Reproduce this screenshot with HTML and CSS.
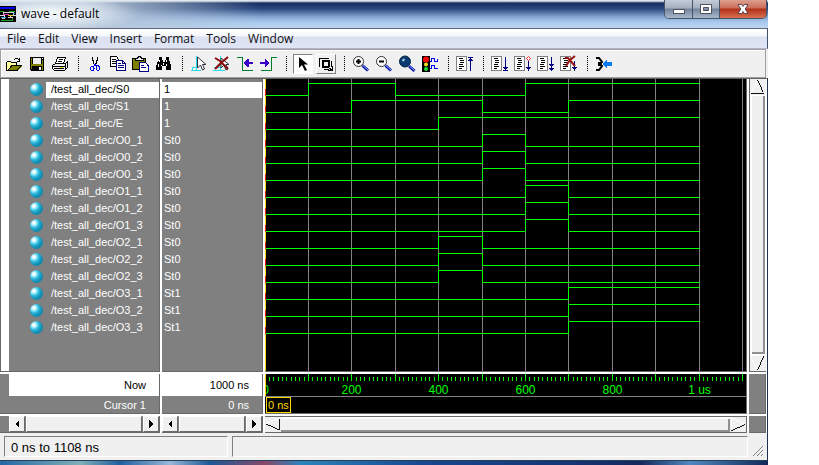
FILE: index.html
```html
<!DOCTYPE html>
<html lang="en">
<head>
<meta charset="utf-8">
<title>wave - default</title>
<link rel="stylesheet" href="styles.css">
</head>
<body>
<main class="window">
  <header class="titlebar">
    <svg class="app-icon" viewBox="0 0 16 16" shape-rendering="crispEdges">
      <path fill="#000" d="M0 0h16v16H0z"/><path fill="#0000f0" d="M0 1h15v2H0z"/>
      <path stroke="#d8d8d8" fill="none" d="M0 9.500h3v-3h10v3h3M4.500 9v3M10.500 9v3M2 12.500h3M8 11.500h5"/>
      <path stroke="#18a018" fill="none" d="M0 5.500h4M9 5.500h6M1 14.500h12M12.500 12v3"/>
      <path stroke="#e040c0" fill="none" d="M3 8.500h6"/><path stroke="#e0d020" fill="none" d="M8 9.500h5"/>
      <path stroke="#30a0e0" fill="none" d="M1 11.500h5M13 7.500h2"/>
    </svg>
    <h1>wave - default</h1>
    <div class="caption">
      <button class="min" aria-label="Minimize"><svg viewBox="0 0 14 12"><rect x="1.500" y="6.500" width="11" height="4" fill="#fff" stroke="#4b5160"/></svg></button>
      <button class="max" aria-label="Maximize"><svg viewBox="0 0 14 12"><path fill="#fff" fill-rule="evenodd" stroke="#4b5160" d="M1.500 1.500h11v9h-11zM4.500 4.500h5v3h-5z"/></svg></button>
      <button class="close" aria-label="Close"><svg viewBox="0 0 14 12"><path fill="#fff" stroke="#5b4650" d="M2 1.500h3.500l1.500 2 1.500-2H12L9.200 6l2.800 4.500H8.500L7 8.500l-1.500 2H2L4.800 6z"/></svg></button>
    </div>
  </header>

  <nav class="menubar">
    <button>File</button><button>Edit</button><button>View</button><button>Insert</button><button>Format</button><button>Tools</button><button>Window</button>
  </nav>

  <div class="toolbar" role="toolbar" aria-label="Wave tools">
    <button aria-label="Open"><svg viewBox="0 0 20 20">
      <path fill="#ffff9c" d="M3 8h4v1h6v3H8l-4 5H3z"/><path fill="#808000" d="M8 12h10l-4 5H4z"/>
      <path stroke="#000" fill="none" d="M2.500 16.500V8M3 7.500h4M7 8.500h6M12.500 9v2M3.500 16.500l4.500-5h9l-4 5H3M10 5.500h1M11 4.500h3M14 5.500h1M15.500 4v4M13 7.500h3"/>
    </svg></button>
    <button aria-label="Save"><svg viewBox="0 0 20 20">
      <path fill="#000" d="M3 3h14v14H4l-1-1z"/><path fill="#808000" d="M4 4h1v11H4zM15 6h1v10h-1z"/><path fill="#808000" d="M4 10h12v2H4z"/>
      <path fill="#efefef" d="M6 4h8v6H6zM15 4h1v1h-1zM12 13h2v3h-2z"/>
    </svg></button>
    <button aria-label="Print"><svg viewBox="0 0 20 20">
      <path fill="#fff" stroke="#000" d="M7.500 3.500h8l-2 6h-8z"/><path stroke="#000" d="M9 5.500h4M8 7.500h4"/>
      <path fill="#efefef" stroke="#000" d="M5.500 9.500h10l2-2v6l-3 3h-10l-2-2v-3z"/><path stroke="#000" fill="none" d="M2 12.500h13M15.500 9.500v6M4 14.500h10"/><path fill="#d8d800" d="M10 13h3v1h-3z"/>
    </svg></button>
    <span class="sep"></span>
    <button aria-label="Cut"><svg viewBox="0 0 20 20">
      <path stroke="#000" fill="none" d="M7.500 3v3l1 1v2l1 2M12.500 3v3l-1 1v2l-2 2"/>
      <path stroke="#0000e8" fill="none" d="M9.500 10v2M10.500 10v2M8 12.500H6.500l-1 1v2l1 1H8l1-2zM11.500 11.500h2l1 2v2l-1 1h-1l-1-1.500z"/>
    </svg></button>
    <button aria-label="Copy"><svg viewBox="0 0 20 20">
      <path fill="#fff" stroke="#000" d="M2.500 2.500h6l2 3v7h-8z"/><path stroke="#000" d="M4 5.500h4M4 7.500h4M4 9.500h4"/>
      <path fill="#fff" stroke="#000080" d="M8.500 6.500h6l3 3v7h-9zM14.500 7v2.500h3"/><path stroke="#000080" d="M10 9.500h3M10 11.500h6M10 13.500h6"/>
    </svg></button>
    <button aria-label="Paste"><svg viewBox="0 0 20 20">
      <path fill="#808000" stroke="#000" d="M1.500 4.500h13v11h-13z"/><path fill="#efefef" stroke="#000" d="M4.500 6.500v-2h2l1-2h2l1 2h2v2z"/>
      <path fill="#fff" stroke="#000080" d="M8.500 8.500h6l2.500 3v5.500H8.500z"/><path stroke="#000080" d="M10 11.500h3M10 13.500h5"/>
    </svg></button>
    <button aria-label="Find"><svg viewBox="0 0 20 20">
      <path fill="#000" d="M5 3h3v3h1v2h2V6h1V3h3v3l1 2 1 3v5h-5v-4H8v4H2v-4l2-5 1-1z"/><path fill="#fff" d="M5 6h1v2H5zM12 6h1v2h-1zM4 10h1v3H4zM12 10h1v2h-1zM7 11h1v1H7zM9 9h1v2H9z"/>
    </svg></button>
    <span class="sep"></span>
    <button aria-label="Add cursor"><svg viewBox="0 0 20 20">
      <path stroke="#28dcec" fill="none" d="M7.500 2v15M3 13.500h6M2 16.500h10M3.500 13v4"/>
      <path class="smooth" fill="#fff" stroke="#30343c" d="M8.500 3v11l3-3 2 5 2-1-2-4.500h3.500z"/>
    </svg></button>
    <button aria-label="Delete cursor"><svg viewBox="0 0 20 20">
      <path stroke="#28dcec" fill="none" d="M8.500 2v15M2 13.500h6M1 16.500h12"/>
      <path class="smooth" fill="#fff" stroke="#30343c" d="M9 4v10l3-3 2 5 2-1-2-4.500h3z"/>
      <path class="smooth" stroke="#880808" stroke-width="2" fill="none" d="M3 4l5 3 8 8M16 3l-6 5-7 7"/>
    </svg></button>
    <button aria-label="Previous transition"><svg viewBox="0 0 20 20">
      <path stroke="#008030" fill="none" d="M2 3.500h5.500v13h10"/><path fill="#3800c8" d="M9 8h1V7h1V6h1V5h2v3h4v2h-4v3h-2v-1h-1v-1h-1v-1H9z"/>
    </svg></button>
    <button aria-label="Next transition"><svg viewBox="0 0 20 20">
      <path stroke="#008030" fill="none" d="M3 16.500h10.500v-13H19"/><path fill="#3800c8" d="M11 8h-1V7H9V6H8V5H7v3H2v2h5v3h1v-1h1v-1h1v-1h1z"/>
    </svg></button>
    <span class="sep"></span>
    <button class="mode pressed" aria-label="Select mode"><svg viewBox="0 0 18 18"><path class="smooth" fill="#000" d="M5 2v11l3-3 3 6 2-1-3-5.500h4z"/></svg></button>
    <button class="mode" aria-label="Zoom mode"><svg viewBox="0 0 18 18">
      <path fill="#000" fill-rule="evenodd" d="M2 3h10v1H3v8H2zM5 5h8v8H5zM7 7v4h4V7zM14 6h1v6h-1zM7 14h5v1H7zM12 12h1v1h1v1h1v-3h1v5h-5v-1h2v-1h-1z"/>
    </svg></button>
    <span class="sep"></span>
    <button aria-label="Zoom in"><svg viewBox="0 0 20 20" class="smooth">
      <circle cx="7.500" cy="7.500" r="5" fill="#fff" stroke="#303030"/><path stroke="#000" stroke-width="2" d="M5 7.500h5M7.500 5v5"/><path stroke="#0818a8" stroke-width="3" d="M11.500 11.500l5.500 5"/><path stroke="#90a0ff" d="M12 11.500l5 4.500"/>
    </svg></button>
    <button aria-label="Zoom out"><svg viewBox="0 0 20 20" class="smooth">
      <circle cx="7.500" cy="7.500" r="5" fill="#fff" stroke="#303030"/><path stroke="#000" stroke-width="2" d="M5 7.500h5"/><path stroke="#0818a8" stroke-width="3" d="M11.500 11.500l5.500 5"/><path stroke="#90a0ff" d="M12 11.500l5 4.500"/>
    </svg></button>
    <button aria-label="Zoom full"><svg viewBox="0 0 20 20" class="smooth">
      <circle cx="8" cy="7.500" r="5.500" fill="#083c70" stroke="#082848"/><path stroke="#a8c8e0" stroke-width="2" d="M5.500 7l2-2"/><path stroke="#0818a8" stroke-width="3" d="M12 12l5.500 5"/><path stroke="#90a0ff" d="M12.500 12l5 4.500"/>
    </svg></button>
    <button aria-label="Stop"><svg viewBox="0 0 20 20">
      <path fill="#000" d="M2 2h8v16H2z"/><g class="smooth"><circle cx="6" cy="5.500" r="3" fill="#f00"/><circle cx="6" cy="10.500" r="2" fill="#e8e020"/><circle cx="6" cy="15" r="2" fill="#20e030"/></g>
      <path stroke="#0000e8" fill="none" d="M10 7.500h1.500v-3h3v3h3v-3M10 14.500h1.500v-3h3v3h3"/>
    </svg></button>
    <span class="sep"></span>
    <button aria-label="Restart"><svg viewBox="0 0 20 20">
      <path class="page" d="M1.500 2.500h10v14h-10z"/><path class="code" d="M4 4.500h4M5 6.500h4M5 8.500h4M4 10.500h4M4 12.500h5M4 14.500h3"/><path class="arrow" d="M15.500 3v14M13 3.500h5M14 5.500h3M13 6.500h5"/>
    </svg></button>
    <span class="sep"></span>
    <button aria-label="Run"><svg viewBox="0 0 20 20">
      <path class="page" d="M1.500 2.500h10v14h-10z"/><path class="code" d="M4 4.500h4M5 6.500h4M5 8.500h4M4 10.500h4M4 12.500h5M4 14.500h3"/><path class="arrow" d="M15.500 3v14M13 13.500h5M14 14.500h3M13 16.500h5"/>
    </svg></button>
    <button aria-label="Continue run"><svg viewBox="0 0 20 20">
      <path class="page" d="M1.500 2.500h10v14h-10z"/><path class="code" d="M4 4.500h4M5 6.500h4M5 8.500h4M4 10.500h4M4 12.500h5M4 14.500h3"/><path class="arrow" d="M15.500 7v10M13 13.500h5M14 14.500h3"/><path class="smooth" fill="#fff" stroke="#f02020" d="M15.500 2.500l2 2-2 2-2-2z"/>
    </svg></button>
    <button aria-label="Run all"><svg viewBox="0 0 20 20">
      <path class="page" d="M1.500 2.500h10v14h-10z"/><path class="code" d="M4 4.500h4M5 6.500h4M5 8.500h4M4 10.500h4M4 12.500h5M4 14.500h3"/><path class="arrow" d="M15.500 3v14M13 10.500h5M14 11.500h3M13 14.500h5M14 15.500h3"/>
    </svg></button>
    <button aria-label="Break"><svg viewBox="0 0 20 20">
      <path class="page" d="M1.500 2.500h10v14h-10z"/><path class="code" d="M4 4.500h4M5 6.500h4M5 8.500h4M4 10.500h4M4 12.500h5M4 14.500h3"/><path class="arrow" d="M15.500 7v10M13 13.500h5M14 14.500h3"/><path class="smooth" stroke="#981010" stroke-width="2" fill="none" d="M6 4h3l7 8M16 2l-5 4-4 6"/>
    </svg></button>
    <span class="sep"></span>
    <button aria-label="Expand"><svg viewBox="0 0 20 20">
      <path class="smooth" stroke="#000" stroke-width="2" fill="none" d="M2 4h3l3 4-1 1H4M4 11h3l1 1-3 4H2"/><path fill="#0878f0" d="M8 10l5-5v3h5v4h-5v3z"/>
    </svg></button>
  </div>

  <section class="panes">
    <div class="pane names">
      <div class="gutter"></div>
      <ul id="names"></ul>
    </div>
    <div class="pane"><ul id="values"></ul></div>
    <div class="pane black"><svg class="plot" id="waves" role="img" aria-label="Signal waveforms"></svg></div>
    <div class="pane vscroll">
      <button aria-label="Scroll up"><svg viewBox="0 0 16 16"><path class="lit" d="M7.500 1l-7 14"/><path class="shade" d="M8.500 1l6 13.500H1"/></svg></button>
      <div class="thumb"></div>
      <button aria-label="Scroll down"><svg viewBox="0 0 16 16"><path class="lit" d="M14 .5H.5l7 14"/><path class="shade" d="M14.500 1l-6 14"/></svg></button>
    </div>

    <div class="pane foot indent"><p class="now">Now</p><p>Cursor 1</p></div>
    <div class="pane foot"><p class="now">1000 ns</p><p>0 ns</p></div>
    <div class="pane black">
      <svg class="ruler" id="ruler" role="img" aria-label="Time axis"></svg>
      <div class="cursor-row"><span>0 ns</span></div>
    </div>
    <div class="pane"></div>

    <div class="pane hscroll indent">
      <button aria-label="Scroll names left"><svg viewBox="0 0 8 8"><path d="M6 0v8L2 4z"/></svg></button><div class="track"></div><button aria-label="Scroll names right"><svg viewBox="0 0 8 8"><path d="M2 0v8l4-4z"/></svg></button>
    </div>
    <div class="pane hscroll">
      <button aria-label="Scroll values left"><svg viewBox="0 0 8 8"><path d="M6 0v8L2 4z"/></svg></button><div class="track"></div><button aria-label="Scroll values right"><svg viewBox="0 0 8 8"><path d="M2 0v8l4-4z"/></svg></button>
    </div>
    <div class="pane wavescroll">
      <button aria-label="Scroll waves left"><svg viewBox="0 0 16 16"><path class="lit" d="M1 7l14-6"/><path class="shade" d="M1 7.500l13.500 6.500V2"/></svg></button>
      <div class="thumb"></div>
      <button aria-label="Scroll waves right"><svg viewBox="0 0 16 16"><path class="lit" d="M1 14V1l14 6.500"/><path class="shade" d="M1 14.500l14-6"/></svg></button>
    </div>
    <div class="pane"></div>
  </section>

  <footer class="status">
    <p>0 ns to 1108 ns</p><p class="wide"></p>
    <svg viewBox="0 0 12 12"><path stroke="#808080" d="M1 11L11 1M5 11l6-6M9 11l2-2"/></svg>
  </footer>
  <div class="desktop"></div>
</main>
<script src="wave.js"></script>
</body>
</html>
```
FILE: styles.css
```css
* { box-sizing: border-box; }
body { margin: 0; background: #fff; font: 11px/16px "Liberation Sans", Arial, sans-serif; }
h1, p, ul { margin: 0; padding: 0; font-weight: normal; }
ul { list-style: none; }
button { padding: 0; border: 0; background: none; font: inherit; color: inherit; }
svg { display: block; shape-rendering: crispEdges; }
.smooth, .caption svg, .status svg { shape-rendering: auto; }

.window { display: flex; flex-direction: column; height: 100vh; margin-right: 51px; background: #f0f0f0; }

.titlebar {
  display: flex; align-items: center; flex: none; height: 28px;
  background:
    linear-gradient(#dfe8ee 0 1px, transparent 3px),
    radial-gradient(ellipse 90px 18px at 50px 14px, #eef3f8 20%, transparent),
    linear-gradient(90deg, #b4c5d8 0, #b4c5d8 90px, transparent 260px),
    linear-gradient(#182c60 3px, #2c4a80 9px, #86a8d4 17px, #a8c8ec 22px, #bcd6f2);
}
.app-icon { width: 16px; height: 16px; }
h1 { flex: 1; padding-left: 5px; font: 12px/18px "Open Sans", "Noto Sans", sans-serif; color: #000; }
.caption {
  display: flex; align-self: flex-start; height: 19px; margin-right: 1px; overflow: hidden;
  border: 1px solid #4a5468; border-top: 0; border-radius: 0 0 5px 5px;
}
.caption button {
  display: grid; place-items: center; width: 28px; border-right: 1px solid #4a5468;
  background: linear-gradient(#c4ccd8, #a4aebe 8px, #76849a 9px, #a8b8cc);
}
.caption .max { width: 27px; }
.caption .close { width: 46px; border: 0; background: linear-gradient(#dca090, #cc6c58 8px, #b03018 9px, #d87050); }
.caption svg { width: 14px; height: 12px; }

.menubar {
  display: flex; flex: none; gap: 12px; height: 21px; padding-left: 7px;
  border-top: 1px solid #5c6678; border-bottom: 1px solid #b0b4c8; border-right: 1px solid #405068;
  background: linear-gradient(#fff 1px, #f4f6fc 7px, #dce1f2 8px, #e0e5f5);
  font: 12px/20px "Open Sans", "Noto Sans", sans-serif; color: #101010;
}

.toolbar {
  display: flex; flex: none; height: 29px; margin-right: 2px; padding-left: 2px; align-items: center;
  border: 1px solid #a0a0a0; box-shadow: inset 1px 1px #fff;
}
.toolbar button { display: grid; place-items: center; flex: none; width: 22px; margin-right: 1px; height: 20px; }
.toolbar svg { width: 20px; height: 20px; }
.toolbar .mode { width: 20px; margin: 0 2px 0 1px; border: 1px solid; border-color: #fff #808080 #808080 #fff; }
.toolbar .pressed { background: #fff; border-color: #808080 #fff #fff #808080; }
.toolbar .mode svg { width: 18px; height: 18px; }
.sep { flex: none; width: 12px; height: 16px; background: repeating-linear-gradient(#000 0 1px, transparent 1px 2px) center / 1px 100% no-repeat; }
.page { fill: #fff; stroke: #808080; }
.code { fill: none; stroke: #000; }
.arrow { fill: none; stroke: #000080; }

.panes {
  display: grid; flex: 1; min-height: 0; gap: 2px;
  grid-template: minmax(0, 1fr) 40px 17px / 160px 101px minmax(0, 1fr) 17px;
  padding-right: 1px; border-top: 1px solid #606060; border-right: 1px solid #203050; background: #fff;
}
.pane { min-width: 0; overflow: hidden; background: #808080; border-right: 1px solid #696969; border-bottom: 1px solid #696969; color: #fff; }
.black { background: #000; }
.names { display: flex; }
.gutter { width: 9px; border-left: 1px solid #696969; background: #fff; }
.names ul { flex: 1; }
.pane ul { padding-top: 3px; }
.pane li { display: flex; height: 16px; margin-bottom: 1px; line-height: 14px; }
#values li { padding-left: 2px; }
#values li:first-child, #names li:first-child span { background: #fff; color: #000; }
#names span { flex: 1; padding-left: 5px; }
.ball {
  width: 13px; height: 13px; margin: 1px 3px 0 21px; border-radius: 50%;
  background: radial-gradient(circle at 4px 4px, #fff 1px, #80e4f8 3px, #28b4d8 5px, #108cb0 8px);
}
.plot { width: 100%; height: 100%; }
.grid { stroke: #808080; }
.signal { stroke: #0f0; fill: none; }

.foot { text-align: right; }
.foot p { height: 17px; padding-right: 13px; line-height: 18px; }
.foot .now { height: 22px; line-height: 22px; background: #fff; color: #000; }
.indent { padding-left: 9px; }
.ruler { width: 100%; height: 22px; fill: #0f0; font-size: 12px; }
.cursor-row { height: 17px; padding-left: 1px; border-top: 1px solid #808080; color: #ffd800; }
.cursor-row span { display: block; width: 25px; height: 16px; padding-left: 1px; border: 1px solid #ffd800; line-height: 15px; }

.hscroll { display: flex; gap: 1px; }
.hscroll button, .track { background: #f0f0f0; border: 1px solid; border-color: #fff #696969 #696969 #fff; }
.hscroll button { display: grid; place-items: center; width: 16px; flex: none; }
.hscroll svg { width: 8px; height: 8px; }
.track { flex: 1; }
.wavescroll { display: flex; border-top: 1px solid #696969; background: #fff; }
.wavescroll button, .vscroll button { flex: none; background: #f0f0f0; }
.wavescroll svg { width: 16px; height: 15px; }
.thumb { flex: 1; background: #f0f0f0; }
.wavescroll .thumb { margin-top: 2px; border-right: 2px solid #909090; border-bottom: 2px solid #909090; }
.vscroll { display: flex; flex-direction: column; border-left: 1px solid #696969; border-right: 0; background: #fff; }
.vscroll svg { width: 15px; height: 16px; }
.vscroll .thumb { margin: 1px 1px 1px 2px; border-right: 2px solid #909090; border-bottom: 2px solid #909090; }
.lit { fill: none; stroke: #fff; }
.shade { fill: none; stroke: #000; }

.status {
  display: flex; flex: none; gap: 4px; height: 28px; padding: 3px 3px 3px 4px;
  border-right: 1px solid #203050; border-bottom: 1px solid #284058; font-size: 13px; line-height: 22px;
}
.status p { width: 224px; padding-left: 6px; border: 1px solid; border-color: #808080 #fff #fff #808080; }
.status .wide { flex: 1; }
.status svg { width: 12px; height: 12px; align-self: flex-end; }
.desktop { flex: none; height: 4px; background: linear-gradient(90deg, #2468a4, #80b0b8 80px, #2060a0 120px, #98b8d8 170px, #1c5898 210px, #884868 265px, #2c84bc 300px, #184890 420px, #14306c 600px, #14285c 640px, #5088c0 690px, #102858); }
```
FILE: wave.js
```javascript
// Each signal toggles from 0 at the listed times, in units of 100 ns.
const signals = [
  ["S0", "1", [1, 3, 6]],
  ["S1", "1", [2, 5, 7]],
  ["E", "1", [4]],
  ["O0_1", "St0", [5, 6]],
  ["O0_2", "St0", [5, 6]],
  ["O0_3", "St0", [5, 6]],
  ["O1_1", "St0", [6, 7]],
  ["O1_2", "St0", [6, 7]],
  ["O1_3", "St0", [6, 7]],
  ["O2_1", "St0", [4, 5]],
  ["O2_2", "St0", [4, 5]],
  ["O2_3", "St0", [4, 5]],
  ["O3_1", "St1", [7]],
  ["O3_2", "St1", [7]],
  ["O3_3", "St1", [7]]
];
const STEP = 43.4;
const ROW = 17;
const xAt = t => Math.floor(t * STEP + 0.01) + 0.5;

document.getElementById("names").innerHTML = signals
  .map(([name]) => `<li><i class="ball"></i><span>/test_all_dec/${name}</span></li>`).join("");
document.getElementById("values").innerHTML = signals
  .map(([, value]) => `<li>${value}</li>`).join("");

let plot = "";
for (let t = 1; t <= 11; t++) plot += `<path class="grid" d="M${xAt(t)} 0V2000"/>`;
plot += `<path stroke="#ffd800" d="M.5 0V2000"/>`;
signals.forEach(([, , edges], row) => {
  const low = row * ROW + 16.5;
  const high = low - 12;
  let level = low;
  let d = `M1 ${low}`;
  for (const t of edges) {
    level = level === low ? high : low;
    d += `H${xAt(t)}V${level}`;
  }
  plot += `<path stroke="#f02000" d="M.5 ${low - 6.5}v7"/><path class="signal" d="${d}H${xAt(10)}"/>`;
});
document.getElementById("waves").innerHTML = plot;

let ruler = "";
for (let i = 0; i <= 110; i++) {
  ruler += `<path stroke="#0f0" d="M${xAt(i / 10)} ${i % 10 ? 3 : 0}V7"/>`;
}
[[0, "0"], [2, "200"], [4, "400"], [6, "600"], [8, "800"], [10, "1 us"]].forEach(([t, label]) => {
  ruler += `<text x="${xAt(t)}" y="20" text-anchor="middle">${label}</text>`;
});
ruler += `<path stroke="#ffd800" d="M.5 0V22"/>`;
document.getElementById("ruler").innerHTML = ruler;
```
